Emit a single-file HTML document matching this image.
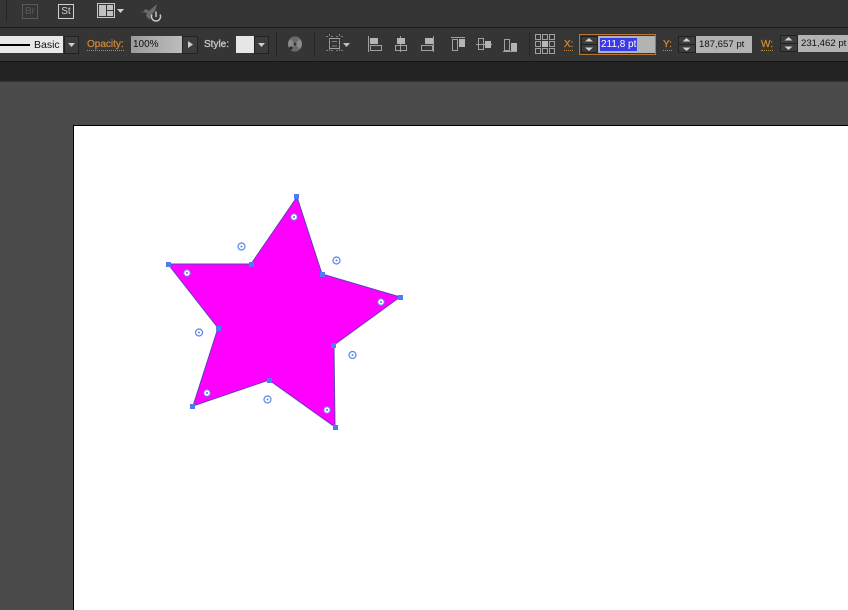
<!DOCTYPE html>
<html><head><meta charset="utf-8">
<style>
html,body{margin:0;padding:0;background:#4b4b4b;}
#p{position:relative;width:848px;height:610px;overflow:hidden;background:#4b4b4b;font-family:"Liberation Sans",sans-serif;filter:blur(0.35px);}
.a{position:absolute;}
.l{position:absolute;font-size:10px;font-weight:normal;-webkit-text-stroke:0.3px currentColor;white-space:nowrap;line-height:12px;}
.or{color:#c98639;border-bottom:1px dotted #c98639;line-height:11px;}
.f{position:absolute;background:#b3b3b3;color:#111;font-size:10px;line-height:17px;white-space:nowrap;}
.b{position:absolute;background:#3c3c3c;border:1px solid #222;box-sizing:border-box;}
</style></head><body>
<div id="p">
<div class="a" style="left:0;top:0;width:848px;height:27px;background:#353535"></div>
<div class="a" style="left:0;top:27px;width:848px;height:1px;background:#1a1a1a"></div>
<div class="a" style="left:0;top:28px;width:848px;height:33px;background:#353535"></div>
<div class="a" style="left:0;top:61px;width:848px;height:1px;background:#161616"></div>
<div class="a" style="left:0;top:62px;width:848px;height:19px;background:#232323"></div>
<div class="a" style="left:0;top:81px;width:848px;height:1px;background:#333"></div>
<div class="a" style="left:73px;top:125px;width:775px;height:485px;background:#fff;border-top:1px solid #000;border-left:1px solid #000;box-sizing:border-box"></div>

<svg class="a" style="left:0;top:0" width="848" height="82" fill="none">
<path d="M6.5 0V22" stroke="#262626"/>
<rect x="22.5" y="4.500" width="15" height="14" stroke="#5a5a5a"/>
<rect x="58.500" y="4.500" width="15" height="14" stroke="#d0d0d0"/>
<rect x="97.500" y="3.500" width="17" height="14" stroke="#c8c8c8"/>
<rect x="99" y="5" width="7" height="11" fill="#c0c0c0"/><rect x="107" y="5" width="6" height="5" fill="#c0c0c0"/><rect x="107" y="11" width="6" height="5" fill="#c0c0c0"/>
<path d="M117 9H124L120.500 13Z" fill="#d0d0d0"/>
<path d="M140 14L146 9L149 11L157 4L155 11L151 15L150 20L146 16L147 13L143 12Z" fill="#6a6a6a"/>
<path d="M152 14.500A4.500 4.500 0 1 0 160 14.500" stroke="#c8c8c8" stroke-width="1.500"/><path d="M156 11.500V17" stroke="#c8c8c8" stroke-width="1.500"/>

<path d="M276.500 32V57M314.500 32V57M529.500 32V57" stroke="#262626"/>
<circle cx="295" cy="44" r="7" fill="#8a8a8a"/>
<path d="M295 44L290 38.500A7 7 0 0 1 300 38.500ZM295 44L290 49.500A7 7 0 0 0 300 49.500Z" fill="#6a6a6a"/>
<circle cx="291" cy="48" r="1.500" fill="#222"/><circle cx="295" cy="44" r="1.500" fill="#333"/>

<g stroke="#a0a0a0">
<rect x="329.500" y="38.500" width="10" height="10"/>
<path d="M326 36.500H343M326 50.500H343M329.500 34V52M339.500 34V52" stroke-dasharray="2 3" stroke="#808080"/>
<path d="M332 41.500H337M332 46H337" stroke="#808080"/>
<path d="M368.500 36V52"/><rect x="370.500" y="45.500" width="11" height="5"/>
<path d="M400.500 36V52"/><rect x="395.500" y="45.500" width="11" height="5"/>
<path d="M433.500 36V52"/><rect x="421.500" y="45.500" width="11" height="5"/>
<path d="M451 37.500H465"/><rect x="452.500" y="39.500" width="5" height="11"/>
<path d="M476 44.500H492"/><rect x="478.500" y="38.500" width="5" height="11"/>
<path d="M503 51.500H517"/><rect x="504.500" y="39.500" width="5" height="11"/>
</g>
<path d="M343 43H350L346.500 47Z" fill="#c0c0c0"/>
<g fill="#b4b4b4">
<rect x="370" y="38" width="8" height="6"/><rect x="397" y="38" width="8" height="6"/><rect x="425" y="38" width="8" height="6"/>
<rect x="459" y="39" width="6" height="8"/><rect x="485" y="41" width="6" height="7"/><rect x="511" y="43" width="6" height="8"/>
</g>
<g stroke="#a0a0a0">
<rect x="535.500" y="34.500" width="5" height="5"/><rect x="542.500" y="34.500" width="5" height="5"/><rect x="549.500" y="34.500" width="5" height="5"/>
<rect x="535.500" y="41.500" width="5" height="5"/><rect x="549.500" y="41.500" width="5" height="5"/>
<rect x="535.500" y="48.500" width="5" height="5"/><rect x="542.500" y="48.500" width="5" height="5"/><rect x="549.500" y="48.500" width="5" height="5"/>
</g>
<rect x="542" y="41" width="6" height="6" fill="#b8b8b8"/>
</svg>

<!-- stroke dropdown -->
<div class="a" style="left:0;top:36px;width:63px;height:17px;background:#e8e8e8"></div>
<div class="a" style="left:0;top:44px;width:30px;height:2px;background:#000"></div>
<div class="a" style="left:34px;top:39px;color:#111;font-size:10.5px;line-height:12px;white-space:nowrap">Basic</div>
<div class="b" style="left:64px;top:36px;width:15px;height:18px"></div>
<svg class="a" style="left:64px;top:36px" width="15" height="18"><path d="M4 7H11L7.500 11Z" fill="#ccc"/></svg>

<div class="l or" style="left:87px;top:39px;font-size:10px">Opacity:</div>
<div class="f" style="left:131px;top:36px;width:51px;height:17px;background:linear-gradient(90deg,#9c9c9c,#bcbcbc);padding-left:2px;box-sizing:border-box;font-size:10px;line-height:18px">100%</div>
<div class="b" style="left:182px;top:36px;width:16px;height:18px"></div>
<svg class="a" style="left:182px;top:36px" width="16" height="18"><path d="M6 5V12L11 8.500Z" fill="#ccc"/></svg>
<div class="l" style="left:204px;top:39px;color:#c8c8c8;font-size:10px">Style:</div>
<div class="a" style="left:236px;top:36px;width:18px;height:17px;background:#e6e6e6"></div>
<div class="b" style="left:254px;top:36px;width:15px;height:18px"></div>
<svg class="a" style="left:254px;top:36px" width="15" height="18"><path d="M4 7H11L7.500 11Z" fill="#ccc"/></svg>

<!-- X -->
<div class="l or" style="left:564px;top:39px;font-size:10px">X:</div>
<div class="a" style="left:579px;top:34px;width:77px;height:21px;border:1px solid #b5763a;box-sizing:border-box"></div>
<div class="b" style="left:581px;top:36px;width:17px;height:17px"></div>
<div class="f" style="left:598px;top:36px;width:57px;height:17px"></div>
<div class="a" style="left:600px;top:38px;width:37px;height:13px;background:#3b3be6;color:#fff;font-size:10px;line-height:13px;padding-left:1px;box-sizing:border-box;white-space:nowrap;overflow:hidden">211,8 pt</div>
<!-- Y -->
<div class="l or" style="left:663px;top:39px;font-size:10px">Y:</div>
<div class="b" style="left:678px;top:36px;width:18px;height:17px"></div>
<div class="f" style="left:696px;top:36px;width:56px;height:17px;padding-left:3px;box-sizing:border-box;font-size:9.6px;line-height:18px">187,657 pt</div>
<!-- W -->
<div class="l or" style="left:761px;top:39px;font-size:10px">W:</div>
<div class="b" style="left:780px;top:35px;width:18px;height:17px"></div>
<div class="f" style="left:798px;top:35px;width:50px;height:17px;padding-left:3px;box-sizing:border-box;font-size:9.6px;line-height:17px">231,462 pt</div>
<svg class="a" style="left:0;top:0" width="848" height="60">
<g fill="#d0d0d0">
<path d="M585 41.500H593L589 38ZM585 47.500H593L589 51Z"/>
<path d="M682.500 41.500H690.500L686.500 38ZM682.500 47.500H690.500L686.500 51Z"/>
<path d="M784.500 40.500H792.500L788.500 37ZM784.500 46.500H792.500L788.500 50Z"/>
</g>
<path d="M582 44.500H597M679 44.500H695M781 43.500H797" stroke="#222"/>
</svg>

<!-- Star -->
<svg class="a" style="left:0;top:0" width="848" height="610" fill="none">
<path d="M297 197L322 274L400 297L334 345L335 427L269 380L193 406L218 328L168 264L251 264Z" fill="#ff00ff" stroke="#5b3fc0" stroke-width="1"/>
<g fill="#4f7cf0">
<rect x="294" y="194" width="5" height="5"/><rect x="320" y="272" width="5" height="5"/><rect x="398" y="295" width="5" height="5"/><rect x="331" y="343" width="5" height="5"/><rect x="333" y="425" width="5" height="5"/><rect x="267" y="378" width="5" height="5"/><rect x="190" y="404" width="5" height="5"/><rect x="216" y="326" width="5" height="5"/><rect x="166" y="262" width="5" height="5"/><rect x="249" y="262" width="5" height="5"/>
</g>
<g stroke="#5a84ea" stroke-width="1.200">
<circle cx="241.500" cy="246.500" r="3.500"/><circle cx="336.500" cy="260.500" r="3.500"/><circle cx="352.500" cy="355" r="3.500"/><circle cx="267.500" cy="399.500" r="3.500"/><circle cx="199" cy="332.500" r="3.500"/>
</g>
<g fill="#5a84ea">
<circle cx="241.500" cy="246.500" r="1"/><circle cx="336.500" cy="260.500" r="1"/><circle cx="352.500" cy="355" r="1"/><circle cx="267.500" cy="399.500" r="1"/><circle cx="199" cy="332.500" r="1"/>
</g>
<g fill="#fff" stroke="#6a8cf0" stroke-width="1">
<circle cx="294" cy="217" r="3.200"/><circle cx="187" cy="273" r="3.200"/><circle cx="381" cy="302" r="3.200"/><circle cx="327" cy="410" r="3.200"/><circle cx="207" cy="393" r="3.200"/>
</g>
<g fill="#5a6ce0">
<circle cx="294" cy="217" r="1"/><circle cx="187" cy="273" r="1"/><circle cx="381" cy="302" r="1"/><circle cx="327" cy="410" r="1"/><circle cx="207" cy="393" r="1"/>
</g>
</svg>
<div class="a" style="left:22px;top:5px;width:16px;text-align:center;color:#5a5a5a;font-size:10px;line-height:13px">Br</div>
<div class="a" style="left:58px;top:5px;width:16px;text-align:center;color:#d0d0d0;font-size:10px;line-height:13px">St</div>
</div>
</body></html>
